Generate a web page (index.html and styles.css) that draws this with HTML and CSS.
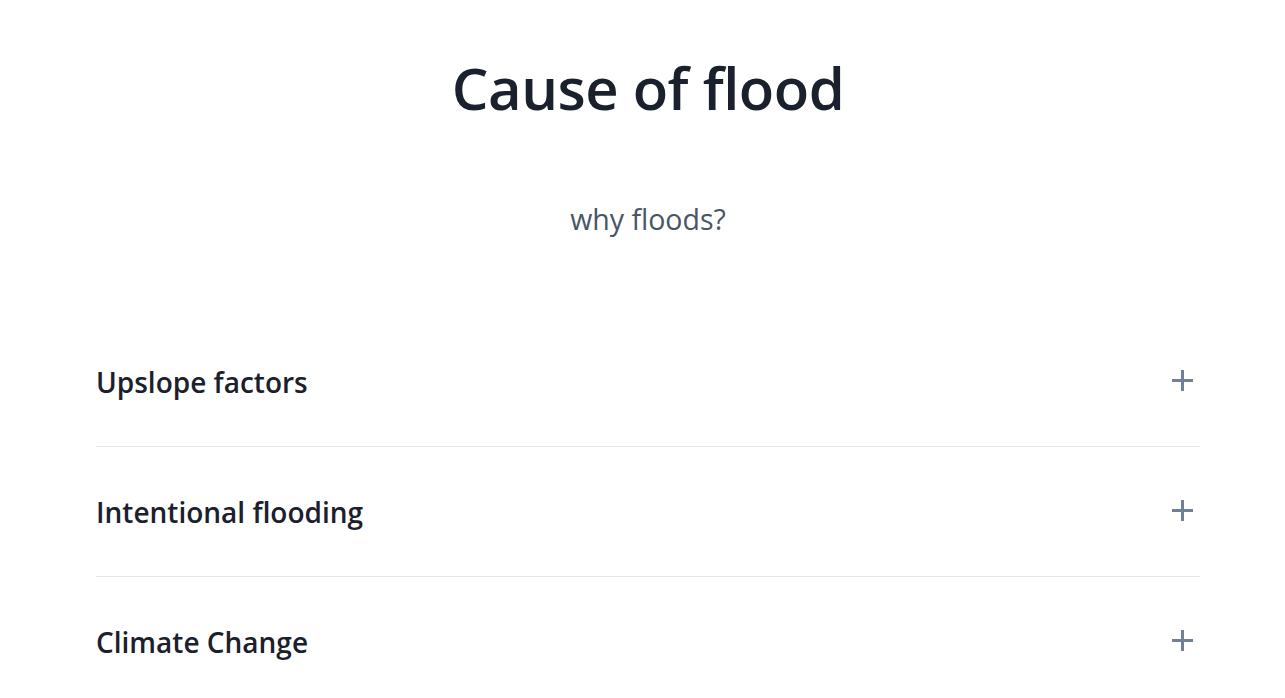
FILE: index.html
```html
<!DOCTYPE html>
<html lang="en">
<head>
<meta charset="utf-8">
<title>Cause of flood</title>
<link rel="stylesheet" href="styles.css">
</head>
<body>
<main class="page">
  <header class="hero">
    <h1 class="title">Cause of flood</h1>
    <p class="subtitle">why floods?</p>
  </header>
  <section class="accordion">
    <div class="item">
      <button class="item-btn" type="button">
        <span class="item-label">Upslope factors</span>
        <span class="plus" aria-hidden="true"></span>
      </button>
    </div>
    <div class="item">
      <button class="item-btn" type="button">
        <span class="item-label">Intentional flooding</span>
        <span class="plus" aria-hidden="true"></span>
      </button>
    </div>
    <div class="item">
      <button class="item-btn" type="button">
        <span class="item-label">Climate Change</span>
        <span class="plus" aria-hidden="true"></span>
      </button>
    </div>
  </section>
</main>
</body>
</html>
```
FILE: styles.css
```css
* { box-sizing: border-box; }
html, body { margin: 0; padding: 0; background: #ffffff; }
body {
  font-family: "Open Sans", "Noto Sans", sans-serif;
  color: #1a202c;
}
.page {
  padding: 0 85px 0 96px;
}
.hero {
  display: flex;
  flex-direction: column;
  align-items: center;
  padding-top: 46px;
}
.title {
  margin: 0;
  font-size: 58px;
  font-weight: 600;
  line-height: 84px;
  color: #1a202c;
  letter-spacing: -0.5px;
}
.subtitle {
  margin: 69px 0 0;
  font-size: 28.5px;
  line-height: 40px;
  color: #4a5568;
}
.accordion {
  margin-top: 78px;
  display: flex;
  flex-direction: column;
}
.item {
  border-bottom: 1px solid #e2e8f0;
}
.item-btn {
  display: flex;
  width: 100%;
  align-items: center;
  justify-content: space-between;
  height: 129px;
  padding: 0 7px 0 0;
  border: 0;
  background: none;
  font: inherit;
  cursor: pointer;
}
.item-label {
  font-size: 28px;
  font-weight: 600;
  color: #1a202c;
}
.plus {
  position: relative;
  display: block;
  width: 21px;
  height: 21px;
  margin-bottom: 2px;
}
.plus::before,
.plus::after {
  content: "";
  position: absolute;
  background: #718096;
}
.plus::before {
  left: 0;
  top: 9px;
  width: 21px;
  height: 3px;
}
.plus::after {
  left: 9px;
  top: 0;
  width: 3px;
  height: 21px;
}
```
